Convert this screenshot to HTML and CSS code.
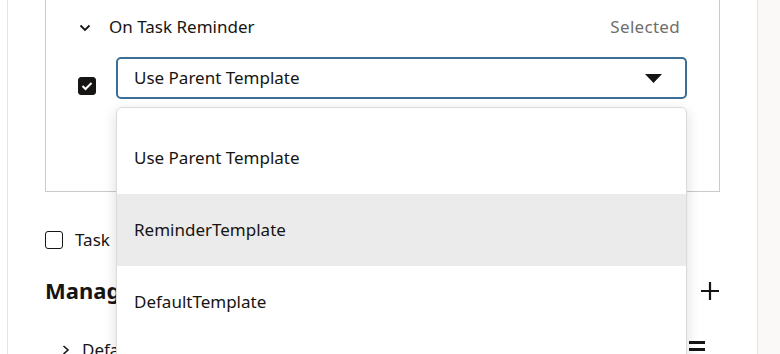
FILE: index.html
```html
<!DOCTYPE html>
<html>
<head>
<meta charset="utf-8">
<link rel="stylesheet" href="styles.css">
</head>
<body>
<div class="page">
  <div class="gutter"></div>
  <div class="panel">
    <div class="box">
      <div class="box-head">
        <svg class="chev" width="12" height="8" viewBox="0 0 12 8"><path d="M1.5 1.5 L6 6 L10.5 1.5" fill="none" stroke="#161513" stroke-width="1.8"/></svg>
        <span class="title">On Task Reminder</span>
        <span class="status">Selected</span>
      </div>
      <div class="box-row">
        <span class="cb checked"><svg width="12" height="10" viewBox="0 0 12 10"><path d="M1.5 5 L4.5 8 L10.5 2" fill="none" stroke="#fff" stroke-width="2"/></svg></span>
        <div class="select">
          <span>Use Parent Template</span>
          <svg class="caret" width="17" height="9" viewBox="0 0 17 9"><path d="M0 0 H17 L8.5 9 Z" fill="#161513"/></svg>
        </div>
      </div>
    </div>
    <div class="opt-row">
      <span class="cb"></span>
      <span class="opt-label">Task</span>
    </div>
    <div class="section-head">
      <h2>Manage</h2>
      <svg width="18" height="18" viewBox="0 0 18 18"><path d="M9 0 V18 M0 9 H18" stroke="#161513" stroke-width="2.2"/></svg>
    </div>
    <div class="list-row">
      <svg class="chev-r" width="8" height="10" viewBox="0 0 8 10"><path d="M1.5 1 L6 5 L1.5 9" fill="none" stroke="#161513" stroke-width="1.6"/></svg>
      <span>Default</span>
      <span class="menu-ic"><i></i><i></i></span>
    </div>
  </div>
  <div class="side"></div>

  <ul class="dropdown">
    <li>Use Parent Template</li>
    <li class="hover">ReminderTemplate</li>
    <li>DefaultTemplate</li>
  </ul>
</div>
</body>
</html>
```
FILE: styles.css
```css
* { box-sizing: border-box; }
html, body { margin: 0; padding: 0; }
body {
  font-family: "Noto Sans", "Open Sans", sans-serif;
  color: #161513;
  background: #faf9f8;
  overflow: hidden;
  width: 780px;
  height: 354px;
}
.page {
  position: relative;
  display: flex;
  height: 354px;
}
.gutter { width: 7px; background: #fff; }
.panel {
  width: 751px;
  background: #fff;
  border-left: 1px solid #e4e3e2;
  border-right: 1px solid #e4e3e2;
  padding: 0 37px 0 37px;
}
.side { flex: 1; background: #faf9f8; }

.box {
  margin-top: -1px;
  border: 1px solid #cbcac9;
  height: 193px;
  padding: 0 39px 0 32px;
}
.box-head {
  display: flex;
  align-items: center;
  height: 52px;
  margin-bottom: 2px;
}
.chev { margin-left: 1px; margin-right: 18px; margin-top: 3px; }
.title { font-size: 17px; flex: 1; }
.status { font-size: 17px; color: #6f6e6c; letter-spacing: 0.3px; }

.box-row {
  display: flex;
  align-items: center;
  margin-top: 5px;
}
.cb {
  flex-shrink: 0;
  display: inline-flex;
  align-items: center;
  justify-content: center;
  width: 18px;
  height: 18px;
  border: 1.5px solid #161513;
  border-radius: 3px;
  background: #fff;
}
.cb.checked { background: #161513; margin-top: 16px; }
.select {
  flex-shrink: 0;
  margin-left: 20px;
  width: 571px;
  height: 42px;
  border: 2px solid #3b6f95;
  border-radius: 5px;
  display: flex;
  align-items: center;
  padding: 0 23px 2px 16px;
  font-size: 17px;
}
.select span { flex: 1; }
.caret { margin-top: 3px; }

.opt-row {
  display: flex;
  align-items: center;
  margin-top: 38px;
  height: 20px;
}
.opt-label { font-size: 17px; margin-left: 12px; margin-top: -2px; }

.section-head {
  display: flex;
  align-items: center;
  justify-content: space-between;
  margin-top: 27px;
  padding-right: 1px;
}
.section-head h2 {
  margin: 0;
  font-size: 22px;
  font-weight: 700;
  line-height: 30px;
  margin-top: -2px;
}
.list-row {
  display: flex;
  align-items: center;
  margin-top: 33px;
  font-size: 17px;
  padding-left: 17px;
}
.chev-r { margin-right: 12px; }
.list-row span:nth-of-type(1) { flex: 1; }
.menu-ic { display: flex; flex-direction: column; gap: 4px; margin-right: 15px; margin-top: -8px; }
.menu-ic i { display: block; width: 16px; height: 3px; background: #161513; }

.dropdown {
  position: absolute;
  left: 116px;
  top: 107px;
  width: 571px;
  height: 260px;
  margin: 0;
  padding: 14px 0 0 0;
  list-style: none;
  background: #fff;
  border: 1px solid #dcdbda;
  border-radius: 6px;
  box-shadow: 0 4px 14px rgba(0, 0, 0, 0.14);
}
.dropdown li {
  height: 72px;
  display: flex;
  align-items: center;
  padding-left: 17px;
  padding-bottom: 2px;
  font-size: 17px;
}
.dropdown li.hover { background: #ebebeb; }
```
